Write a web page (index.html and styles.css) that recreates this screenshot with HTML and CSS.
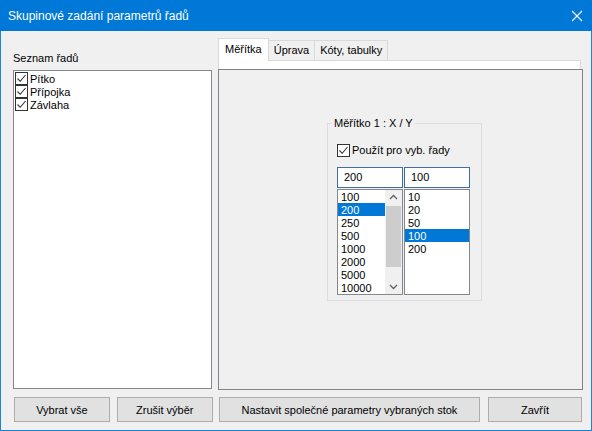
FILE: index.html
```html
<!DOCTYPE html>
<html lang="cs">
<head>
<meta charset="utf-8">
<link rel="stylesheet" href="styles.css">
</head>
<body>
<div class="window">
  <div class="titlebar">
    <span class="title">Skupinové zadání parametrů řadů</span>
    <svg class="close" width="12" height="12" viewBox="0 0 12 12"><path d="M1 1 L11 11 M11 1 L1 11" stroke="#fff" stroke-width="1.1" fill="none"/></svg>
  </div>
  <div class="content">
    <div class="main">
      <div class="left">
        <div class="label">Seznam řadů</div>
        <div class="checklist">
          <div class="citem"><svg class="cb" width="13" height="13" viewBox="0 0 13 13"><rect x="0.5" y="0.5" width="12" height="12" fill="#fff" stroke="#333"/><path d="M2.5 6.5 L5.2 9.3 L10.5 3" stroke="#333" stroke-width="1.1" fill="none"/></svg><span>Pítko</span></div>
          <div class="citem"><svg class="cb" width="13" height="13" viewBox="0 0 13 13"><rect x="0.5" y="0.5" width="12" height="12" fill="#fff" stroke="#333"/><path d="M2.5 6.5 L5.2 9.3 L10.5 3" stroke="#333" stroke-width="1.1" fill="none"/></svg><span>Přípojka</span></div>
          <div class="citem"><svg class="cb" width="13" height="13" viewBox="0 0 13 13"><rect x="0.5" y="0.5" width="12" height="12" fill="#fff" stroke="#333"/><path d="M2.5 6.5 L5.2 9.3 L10.5 3" stroke="#333" stroke-width="1.1" fill="none"/></svg><span>Závlaha</span></div>
        </div>
      </div>
      <div class="right">
        <div class="tabs">
          <div class="tab active">Měřítka</div>
          <div class="tab">Úprava</div>
          <div class="tab">Kóty, tabulky</div>
        </div>
        <div class="tabstrip"></div>
        <div class="panel">
          <fieldset class="group">
            <legend>Měřítko 1 : X / Y</legend>
            <div class="check">
              <svg class="cb" width="13" height="13" viewBox="0 0 13 13"><rect x="0.5" y="0.5" width="12" height="12" fill="#fff" stroke="#333"/><path d="M2.5 6.5 L5.2 9.3 L10.5 3" stroke="#333" stroke-width="1.1" fill="none"/></svg>
              <span>Použít pro vyb. řady</span>
            </div>
            <div class="combos">
              <div class="combo">
                <div class="edit">200</div>
                <div class="list">
                  <div class="items">
                    <div class="item">100</div>
                    <div class="item sel">200</div>
                    <div class="item">250</div>
                    <div class="item">500</div>
                    <div class="item">1000</div>
                    <div class="item">2000</div>
                    <div class="item">5000</div>
                    <div class="item">10000</div>
                  </div>
                  <div class="scrollbar">
                    <svg class="arrow" width="17" height="15" viewBox="0 0 17 15"><path d="M5 9 L8.5 5.5 L12 9" stroke="#606060" stroke-width="1.3" fill="none"/></svg>
                    <div class="track"><div class="thumb"></div></div>
                    <svg class="arrow" width="17" height="15" viewBox="0 0 17 15"><path d="M5 6 L8.5 9.5 L12 6" stroke="#606060" stroke-width="1.3" fill="none"/></svg>
                  </div>
                </div>
              </div>
              <div class="combo">
                <div class="edit">100</div>
                <div class="list">
                  <div class="items">
                    <div class="item">10</div>
                    <div class="item">20</div>
                    <div class="item">50</div>
                    <div class="item sel">100</div>
                    <div class="item">200</div>
                  </div>
                </div>
              </div>
            </div>
          </fieldset>
        </div>
      </div>
    </div>
    <div class="buttons">
      <div class="btn b1">Vybrat vše</div>
      <div class="btn b2">Zrušit výběr</div>
      <div class="btn b3">Nastavit společné parametry vybraných stok</div>
      <div class="btn b4">Zavřít</div>
    </div>
  </div>
</div>
</body>
</html>
```
FILE: styles.css
```css
html, body {
  margin: 0;
  padding: 0;
}
body {
  font-family: "Liberation Sans", Arial, sans-serif;
  font-size: 11px;
  color: #000;
}
.window {
  width: 592px;
  height: 431px;
  box-sizing: border-box;
  border: 1px solid #1883d7;
  border-top: none;
  background: #f0f0f0;
  display: flex;
  flex-direction: column;
}
.titlebar {
  height: 31px;
  background: #0078d7;
  color: #fff;
  display: flex;
  align-items: center;
  justify-content: space-between;
  padding: 0 9px 0 8px;
  margin: 0 -1px;
  flex-shrink: 0;
}
.title {
  font-size: 12px;
  line-height: 16px;
}
.close {
  display: block;
}
.content {
  flex: 1;
  padding: 7px 9px 0 12px;
  display: flex;
  flex-direction: column;
}
.main {
  display: grid;
  grid-template-columns: 199px 365px;
  column-gap: 6px;
  height: 352px;
}
.left {
  display: flex;
  flex-direction: column;
}
.label {
  margin-top: 13px;
  line-height: 15px;
  height: 19px;
}
.checklist {
  height: 319px;
  box-sizing: border-box;
  border: 1px solid #828790;
  background: #fff;
  padding: 1px 1px;
}
.citem {
  display: flex;
  align-items: center;
  height: 13px;
  line-height: 13px;
}
.citem span {
  padding-top: 1px;
}
.cb {
  display: block;
  flex-shrink: 0;
}
.citem .cb {
  margin-right: 2px;
}
.right {
  display: flex;
  flex-direction: column;
}
.tabs {
  display: flex;
  align-items: flex-end;
  height: 22px;
}
.tab {
  height: 20px;
  line-height: 19px;
  box-sizing: border-box;
  border: 1px solid #d9d9d9;
  border-bottom: none;
  padding: 0 5px;
  background: #f0f0f0;
}
.tab + .tab {
  margin-left: -1px;
}
.tab.active {
  height: 23px;
  background: #fff;
  padding: 0 6px;
  line-height: 20px;
  position: relative;
  z-index: 1;
  margin-bottom: -1px;
}
.tabstrip {
  height: 9px;
  width: 363px;
  box-sizing: border-box;
  background: #fff;
  border: 1px solid #d9d9d9;
  border-bottom: none;
}
.panel {
  flex: 1;
  border: 1px solid #838383;
  background: #f0f0f0;
}
.group {
  margin: 46px 0 0 108px;
  width: 155px;
  height: 185px;
  box-sizing: border-box;
  border: 1px solid #dcdcdc;
  padding: 0 0 0 9px;
}
.group legend {
  padding: 0 2px;
  margin-left: -5px;
  line-height: 15px;
}
.check {
  display: flex;
  align-items: center;
  margin-top: 12px;
  height: 14px;
}
.check .cb {
  margin-right: 2px;
}
.combos {
  display: flex;
  margin-top: 10px;
}
.combo {
  width: 66px;
  display: flex;
  flex-direction: column;
}
.combo + .combo {
  margin-left: 1px;
}
.edit {
  height: 21px;
  box-sizing: border-box;
  border: 1px solid #3f6f9f;
  background: #fff;
  line-height: 19px;
  padding-left: 6px;
  margin-bottom: 1px;
}
.list {
  height: 106px;
  box-sizing: border-box;
  border: 1px solid #828790;
  background: #fff;
  display: flex;
  overflow: hidden;
}
.items {
  flex: 1;
}
.item {
  height: 13px;
  line-height: 14px;
  padding-left: 3px;
}
.item.sel {
  background: #0078d7;
  color: #fff;
}
.scrollbar {
  width: 17px;
  display: flex;
  flex-direction: column;
  background: #f0f0f0;
}
.arrow {
  display: block;
  height: 15px;
}
.track {
  flex: 1;
  padding: 1px 1px;
}
.thumb {
  height: 61px;
  background: #cdcdcd;
}
.buttons {
  display: flex;
  margin-top: 7px;
}
.btn {
  height: 25px;
  box-sizing: border-box;
  border: 1px solid #adadad;
  background: #e1e1e1;
  display: flex;
  align-items: center;
  justify-content: center;
}
.b1 { width: 96px; margin-left: 1px; }
.b2 { width: 96px; margin-left: 7px; }
.b3 { width: 262px; margin-left: 6px; }
.b4 { width: 94px; margin-left: 8px; }
```
